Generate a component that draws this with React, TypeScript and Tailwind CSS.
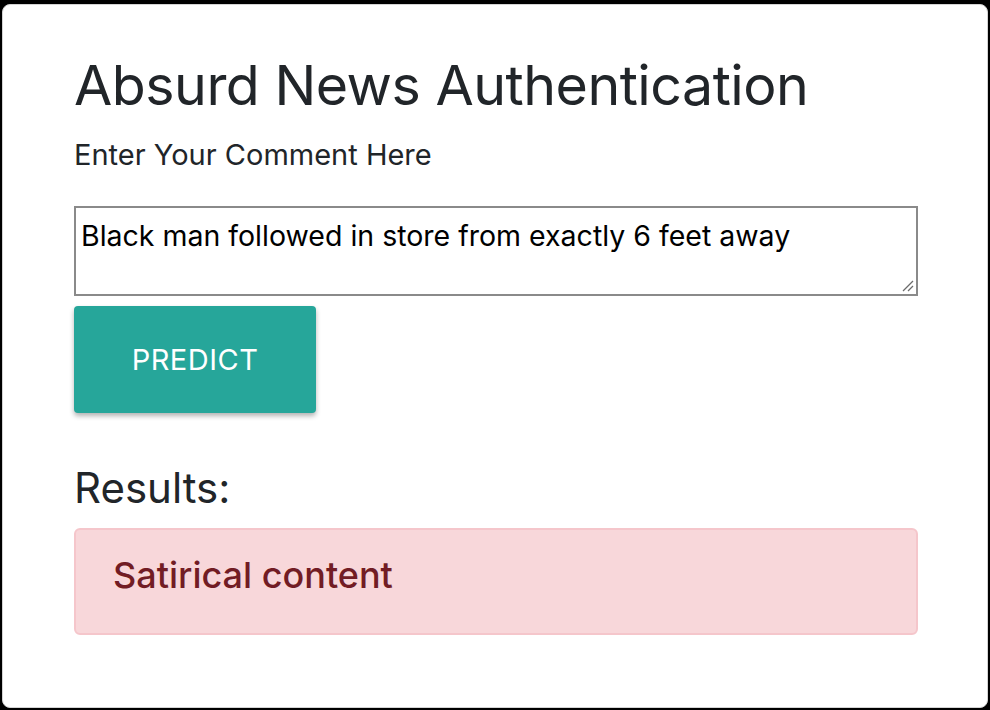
import React from "react";

export default function App() {
  return (
    <div className="w-[990px] h-[710px] bg-black pt-[4px] pl-[2px] pr-[2px] pb-[2px]" style={{ fontFamily: "Inter, 'Noto Sans', sans-serif" }}>
      <div className="h-[704px] bg-white rounded-[8px] border border-[#d4d4d4] pl-[71px] pr-[70px] pt-[46px]">
        <h1 className="text-[55.5px] leading-[68px] text-[#212529] font-normal tracking-[-0.5px]">Absurd News Authentication</h1>
        <p className="mt-[18px] text-[29px] leading-[36px] text-[#212529]">Enter Your Comment Here</p>
        <div className="mt-[33px] w-[844px] h-[90px] border-2 border-[#8a8a8a] relative">
          <div className="pl-[5px] pt-[11px] text-[28.5px] leading-[34px] text-black">Black man followed in store from exactly 6 feet away</div>
          <svg className="absolute right-[2px] bottom-[2px]" width="14" height="14" viewBox="0 0 14 14">
            <line x1="3" y1="13" x2="13" y2="3" stroke="#6b6b6b" strokeWidth="1.3" />
            <line x1="8" y1="13" x2="13" y2="8" stroke="#6b6b6b" strokeWidth="1.3" />
          </svg>
        </div>
        <button className="mt-[10px] w-[242px] h-[107px] bg-[#26a69a] rounded-[4px] text-white text-[29px] tracking-[0.5px] shadow-[0_3px_5px_rgba(0,0,0,0.3)]">PREDICT</button>
        <h3 className="mt-[50px] text-[42px] leading-[50px] text-[#212529]">Results:</h3>
        <div className="mt-[15px] w-[844px] h-[107px] bg-[#f8d7da] border-2 border-[#f5c6cb] rounded-[6px] pl-[37px] pt-[23px]">
          <div className="text-[36px] leading-[44px] text-[#721c24] font-medium">Satirical content</div>
        </div>
      </div>
    </div>
  );
}
